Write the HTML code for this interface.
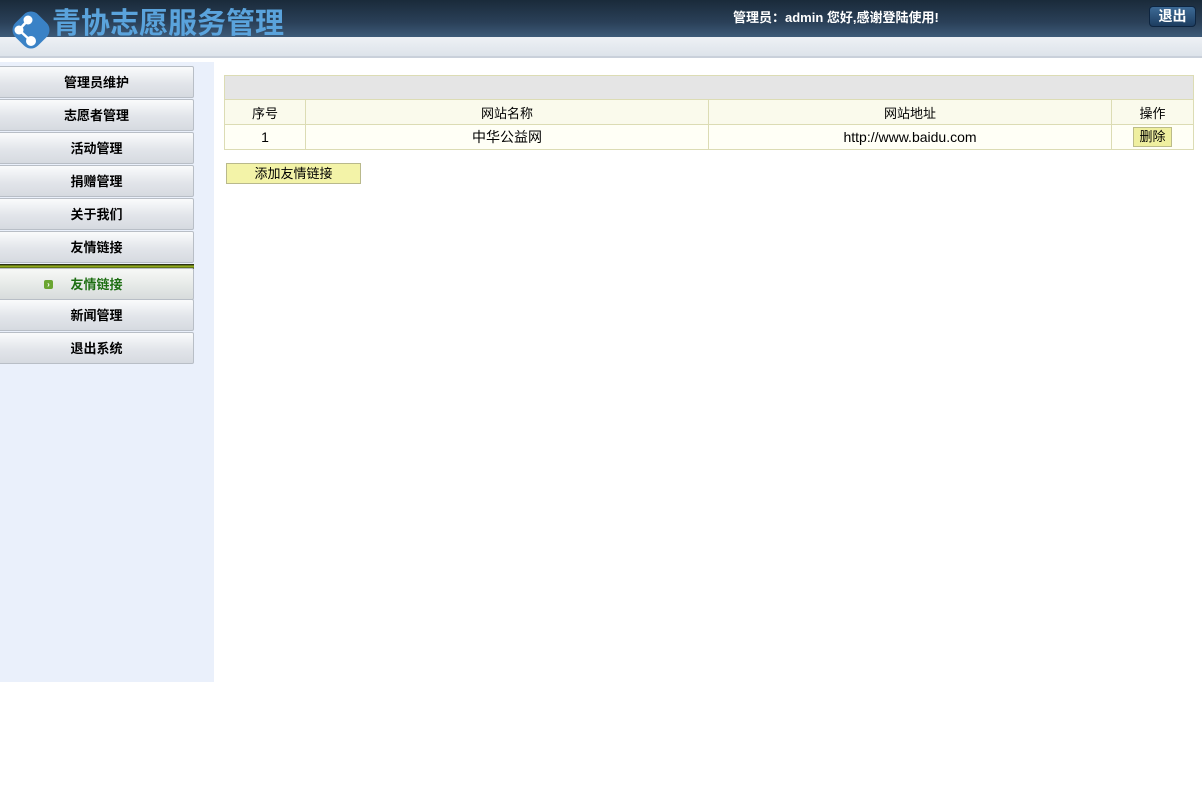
<!DOCTYPE html>
<html><head><meta charset="utf-8"><style>
*{margin:0;padding:0;box-sizing:border-box}
body{width:1202px;height:803px;background:#fff;font-family:"Liberation Sans","Noto Sans CJK SC",sans-serif;font-size:13px;color:#000;position:relative;overflow:hidden}
.top{position:absolute;left:0;top:0;width:1202px;height:37px;background:linear-gradient(#1a2a3a,#2a4058 60%,#3d5a78)}
.band{position:absolute;left:0;top:37px;width:1202px;height:21px;background:linear-gradient(#eef1f5,#dde3ea);border-bottom:2px solid #c9d0da}
.title{position:absolute;left:52px;top:1px;font-size:29px;font-weight:bold;color:#5aa3dc;font-family:"Noto Sans CJK SC",sans-serif;line-height:40px}
.hello{position:absolute;left:733px;top:7px;color:#fff;font-size:13px;font-weight:bold}
.exit{position:absolute;left:1149px;top:6px;width:47px;height:21px;border-radius:4px;background:linear-gradient(#3d6a96,#1d3d60);border:1px solid #0e2540;color:#fff;font-weight:bold;font-size:14px;text-align:center;line-height:19px}
.side{position:absolute;left:0;top:62px;width:214px;height:620px;background:#eaf0fb}
.btn{position:absolute;left:0;width:194px;height:32px;background:linear-gradient(#fafbfc,#e2e5ea 55%,#d6dae0);border:1px solid #b8bec6;border-left:none;border-radius:0 2px 2px 0;text-align:center;line-height:31px;font-weight:bold;font-size:13px}
.act{color:#1d6e12;background:linear-gradient(#f7f8f6,#e4e8e6 60%,#d8dcdc)}
.bar{position:absolute;left:0;top:264px;width:194px;height:5px;background:linear-gradient(#111,#9dbb1e 50%,#111)}
table{position:absolute;left:224px;top:75px;width:970px;border-collapse:collapse}
td{border:1px solid #dcdcb4;text-align:center;height:25px;font-size:13px;background:#fffff6}
.r td{font-size:14px}
.hd td{background:#e5e5e5;height:24px}
.th td{background:#fafaec}
.del{display:inline-block;background:#efef9f;border:1px solid #bcbc88;padding:0 5px;line-height:18px;font-size:13px}
.add{position:absolute;left:226px;top:163px;width:135px;height:21px;background:#f3f3a8;border:1px solid #b9b98c;text-align:center;line-height:20px}
</style></head><body>
<div class="top"></div><div class="band"></div>
<svg style="position:absolute;left:7px;top:6px" width="48" height="48" viewBox="0 0 48 48"><rect x="8" y="8" width="32" height="32" rx="10" transform="rotate(45 24 24)" fill="#3a82c6"/><path d="M12 24 L21 14 M12 24 L24 35" stroke="#fff" stroke-width="2.5"/><circle cx="12" cy="24" r="4.5" fill="#fff"/><circle cx="21" cy="14" r="4.5" fill="#fff"/><circle cx="24" cy="35" r="5" fill="#fff"/></svg>
<div class="title">青协志愿服务管理</div>
<div class="hello">管理员：admin 您好,感谢登陆使用!</div>
<div class="exit">退出</div>
<div class="side"></div>
<div class="btn" style="top:66px">管理员维护</div>
<div class="btn" style="top:99px">志愿者管理</div>
<div class="btn" style="top:132px">活动管理</div>
<div class="btn" style="top:165px">捐赠管理</div>
<div class="btn" style="top:198px">关于我们</div>
<div class="btn" style="top:231px">友情链接</div>
<div class="bar"></div>
<div class="btn act" style="top:268px"><span style="position:absolute;left:44px;top:11px;width:9px;height:9px;background:#6aa531;border-radius:2px;color:#fff;font-size:8px;line-height:9px">›</span>友情链接</div>
<div class="btn" style="top:299px">新闻管理</div>
<div class="btn" style="top:332px">退出系统</div>
<table>
<tr class="hd"><td colspan="4"></td></tr>
<tr class="th"><td style="width:81px">序号</td><td style="width:403px">网站名称</td><td style="width:403px">网站地址</td><td>操作</td></tr>
<tr class="r"><td>1</td><td>中华公益网</td><td>http://www.baidu.com</td><td><span class="del">删除</span></td></tr>
</table>
<div class="add">添加友情链接</div>
</body></html>
